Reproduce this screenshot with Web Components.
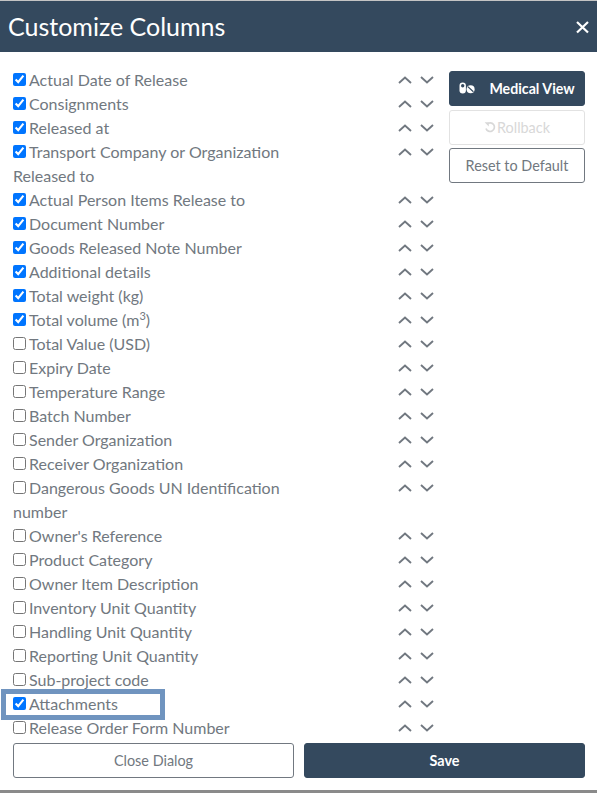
<!DOCTYPE html>
<html>
<head>
<meta charset="utf-8">
<style>
  html, body { margin: 0; height: 100%; background: #fff; }
  body { font-family: Lato, sans-serif; overflow: hidden; }
</style>
</head>
<body>
<customize-dialog>
  <column-row checked>Actual Date of Release</column-row>
  <column-row checked>Consignments</column-row>
  <column-row checked>Released at</column-row>
  <column-row checked>Transport Company or Organization Released to</column-row>
  <column-row checked>Actual Person Items Release to</column-row>
  <column-row checked>Document Number</column-row>
  <column-row checked>Goods Released Note Number</column-row>
  <column-row checked>Additional details</column-row>
  <column-row checked>Total weight (kg)</column-row>
  <column-row checked>Total volume (m<sup style="font-size:11px;line-height:0">3</sup>)</column-row>
  <column-row>Total Value (USD)</column-row>
  <column-row>Expiry Date</column-row>
  <column-row>Temperature Range</column-row>
  <column-row>Batch Number</column-row>
  <column-row>Sender Organization</column-row>
  <column-row>Receiver Organization</column-row>
  <column-row>Dangerous Goods UN Identification number</column-row>
  <column-row>Owner's Reference</column-row>
  <column-row>Product Category</column-row>
  <column-row>Owner Item Description</column-row>
  <column-row>Inventory Unit Quantity</column-row>
  <column-row>Handling Unit Quantity</column-row>
  <column-row>Reporting Unit Quantity</column-row>
  <column-row>Sub-project code</column-row>
  <column-row checked highlight>Attachments</column-row>
  <column-row>Release Order Form Number</column-row>
</customize-dialog>

<script>
  const dialogTemplate = document.createElement('template');
  dialogTemplate.innerHTML = `
    <style>
    :host {
        display: flex;
        flex-direction: column;
        height: 793px;
        box-sizing: border-box;
        border-top: 1px solid #c4c4c4;
        border-bottom: 3px solid #8a8a8a;
        color: #717880;
    }

    header {
        display: flex;
        align-items: center;
        justify-content: space-between;
        height: 51px;
        box-sizing: border-box;
        flex: none;
        background: #34495e;
        color: white;
        padding: 0 8px 2px;
    }

    h1 {
        margin: 0;
        font-size: 25px;
        font-weight: 400;
    }

    header svg {
        display: block;
        margin-top: 2px;
    }

    .content {
        flex: 1;
        display: flex;
        min-height: 0;
        padding: 16px 12px 0 0;
        gap: 12px;
    }

    .list {
        flex: 1;
        height: 671px;
        padding-left: 13px;
        overflow: hidden;
    }

    .side {
        flex: none;
        width: 136px;
        padding-top: 3px;
        display: flex;
        flex-direction: column;
    }

    footer {
        flex: none;
        display: flex;
        gap: 10px;
        padding: 4px 12px 12px 13px;
    }

    footer action-button {
        flex: 1;
    }

    .medical { margin-bottom: 4px; }
    .rollback { margin-bottom: 3px; }
    </style>

    <header>
      <h1>Customize Columns</h1>
      <svg width="14" height="14" viewBox="0 0 14 14" aria-hidden="true">
        <path d="M2 2l11 10.500M13 2L2 12.500" stroke="white" stroke-width="2.2" fill="none"/>
      </svg>
    </header>
    <div class="content">
      <div class="list"><slot></slot></div>
      <div class="side">
        <action-button class="medical" variant="primary">
          <svg slot="icon" width="16" height="12" viewBox="0 0 16 12" aria-hidden="true">
            <rect x="0.5" y="0.500" width="6.400" height="11" rx="3.200" fill="white"/>
            <rect x="2" y="2" width="3.400" height="3.400" rx="1.700" fill="#34495e"/>
            <circle cx="11.600" cy="7.200" r="4" fill="white"/>
            <path d="M8.800 4.600l5.600 5.200" stroke="#34495e" stroke-width="1.200"/>
          </svg>
          <span style="margin-left:14px;font-weight:700;font-size:14.2px">Medical View</span>
        </action-button>
        <action-button class="rollback" variant="disabled">
          <svg slot="icon" width="13" height="12" viewBox="0 0 13 12" aria-hidden="true">
            <path d="M3 3.200A4.300 4.300 0 1 1 2 7.400" stroke="#d8d8d8" stroke-width="1.700" fill="none"/>
            <path d="M0.600 1.200h4.200v4.200z" fill="#d8d8d8"/>
          </svg>
          Rollback
        </action-button>
        <action-button>Reset to Default</action-button>
      </div>
    </div>
    <footer>
      <action-button>Close Dialog</action-button>
      <action-button variant="primary"><b>Save</b></action-button>
    </footer>
  `;

  class CustomizeDialog extends HTMLElement {
    constructor() {
      super();
      this.attachShadow({ mode: 'open' });
      this.shadowRoot.appendChild(dialogTemplate.content.cloneNode(true));
    }
  }

  const rowTemplate = document.createElement('template');
  rowTemplate.innerHTML = `
    <style>
    :host {
        display: flex;
        position: relative;
        font-size: 16px;
        line-height: 24px;
        color: #717880;
    }

    .label {
        width: 282px;
    }

    input {
        width: 13px;
        height: 13px;
        margin: 0 3px 0 0;
        vertical-align: 0;
    }

    .arrows {
        display: flex;
        gap: 8px;
        margin-left: auto;
        margin-right: 3px;
        height: 24px;
        align-items: center;
    }

    svg {
        display: block;
    }

    .mark {
        display: none;
        position: absolute;
        left: -12px;
        top: -3px;
        box-sizing: border-box;
        width: 164px;
        height: 31px;
        border: 5px solid #7094bf;
        pointer-events: none;
    }

    :host([highlight]) .mark {
        display: block;
    }
    </style>

    <div class="label"><input type="checkbox"><slot></slot></div>
    <div class="arrows">
      <svg width="14" height="8" viewBox="0 0 14 8" aria-hidden="true">
        <path d="M1 7l6-5.400L13 7" stroke="#717880" stroke-width="1.900" fill="none"/>
      </svg>
      <svg width="14" height="8" viewBox="0 0 14 8" aria-hidden="true">
        <path d="M1 1l6 5.400L13 1" stroke="#717880" stroke-width="1.900" fill="none"/>
      </svg>
    </div>
    <div class="mark"></div>
  `;

  class ColumnRow extends HTMLElement {
    constructor() {
      super();
      this.attachShadow({ mode: 'open' });
      this.shadowRoot.appendChild(rowTemplate.content.cloneNode(true));
      this.shadowRoot.querySelector('input').checked = this.hasAttribute('checked');
    }
  }

  const buttonTemplate = document.createElement('template');
  buttonTemplate.innerHTML = `
    <style>
    :host {
        display: flex;
        align-items: center;
        justify-content: center;
        box-sizing: border-box;
        height: 35px;
        padding-bottom: 1px;
        border: 1px solid #717880;
        border-radius: 3px;
        background: white;
        color: #717880;
        font-size: 14.4px;
        white-space: nowrap;
    }

    :host([variant="primary"]) {
        background: #34495e;
        border-color: #34495e;
        color: white;
    }

    :host([variant="disabled"]) {
        border-color: #e2e2e2;
        color: #d8d8d8;
    }

    ::slotted(svg) {
        display: block;
        flex: none;
    }
    </style>

    <slot name="icon"></slot><slot></slot>
  `;

  class ActionButton extends HTMLElement {
    constructor() {
      super();
      this.attachShadow({ mode: 'open' });
      this.shadowRoot.appendChild(buttonTemplate.content.cloneNode(true));
    }
  }

  customElements.define('customize-dialog', CustomizeDialog);
  customElements.define('column-row', ColumnRow);
  customElements.define('action-button', ActionButton);
</script>
</body>
</html>
